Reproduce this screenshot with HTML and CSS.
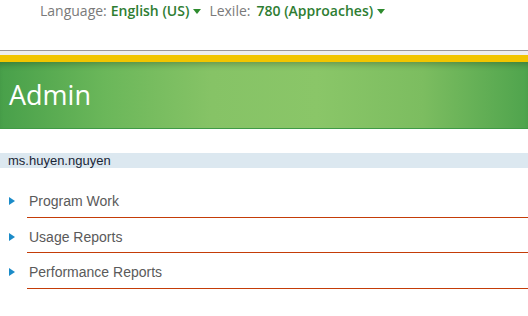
FILE: index.html
```html
<!DOCTYPE html>
<html>
<head>
<meta charset="utf-8">
<link rel="stylesheet" href="styles.css">
</head>
<body>
<div class="topbar">
  <span class="label">Language:</span>
  <span class="value">English (US)</span><span class="caret"></span>
  <span class="label lex">Lexile:</span>
  <span class="value">780 (Approaches)</span><span class="caret"></span>
</div>
<div class="rule"></div>
<div class="stripe"></div>
<div class="banner"><h1>Admin</h1></div>
<div class="user">ms.huyen.nguyen</div>
<ul class="menu">
  <li><span class="tri"></span><span class="item">Program Work</span></li>
  <li><span class="tri"></span><span class="item">Usage Reports</span></li>
  <li><span class="tri"></span><span class="item">Performance Reports</span></li>
</ul>
</body>
</html>
```
FILE: styles.css
```css
html, body { margin: 0; padding: 0; background: #fff; }
body { width: 528px; height: 316px; overflow: hidden; }

.topbar {
  height: 50px;
  box-sizing: border-box;
  padding: 0 0 0 40px;
  font-family: "Open Sans", sans-serif;
  font-size: 14px;
  line-height: 22px;
  display: flex;
  align-items: flex-start;
}
.label { color: #7a7a7a; margin-right: 4px; }
.lex { margin-left: 8px; margin-right: 6px; }
.value { color: #2e7d32; font-weight: 600; }
.caret {
  width: 0; height: 0;
  border-left: 4px solid transparent;
  border-right: 4px solid transparent;
  border-top: 5px solid #2e8b2e;
  margin: 9px 0 0 4px;
}
.rule { height: 1px; background: #9a9696; }
.stripe { height: 4px; background: #eeeeee; }
.banner {
  height: 74px;
  box-sizing: border-box;
  border-top: 7px solid #f2c500;
  border-bottom: 1px solid #3f9a45;
  background: linear-gradient(90deg, #48a04a 0%, #6bb75a 20%, #86c366 40%, #8ac668 60%, #7cbd60 80%, #4fa44d 100%);
  box-shadow: inset 0 6px 6px -4px rgba(0,0,0,0.25);
  padding-left: 9px;
}
.banner h1 {
  margin: 0;
  font-family: "Open Sans", sans-serif;
  font-weight: 400;
  font-size: 27px;
  line-height: 30px;
  padding-top: 18px;
  color: #fff;
}
.user {
  margin-top: 24px;
  height: 15px;
  background: #dce8f0;
  font-family: "Liberation Sans", Arial, sans-serif;
  font-size: 13px;
  line-height: 15px;
  color: #1a2636;
  padding-left: 8px;
}
.menu { list-style: none; margin: 14px 0 0 0; padding: 0; }
.menu li {
  display: flex;
  align-items: flex-start;
  height: 35.5px;
}
.tri {
  width: 0; height: 0;
  border-top: 4px solid transparent;
  border-bottom: 4px solid transparent;
  border-left: 6px solid #1b8bc8;
  margin: 15px 12px 0 9px;
}
.item {
  flex: 1;
  height: 35.5px;
  box-sizing: border-box;
  border-bottom: 1px solid #c43c08;
  font-family: "Liberation Sans", Arial, sans-serif;
  font-size: 14px;
  line-height: 20px;
  padding: 9px 0 0 2px;
  color: #5a5a5a;
}
```
